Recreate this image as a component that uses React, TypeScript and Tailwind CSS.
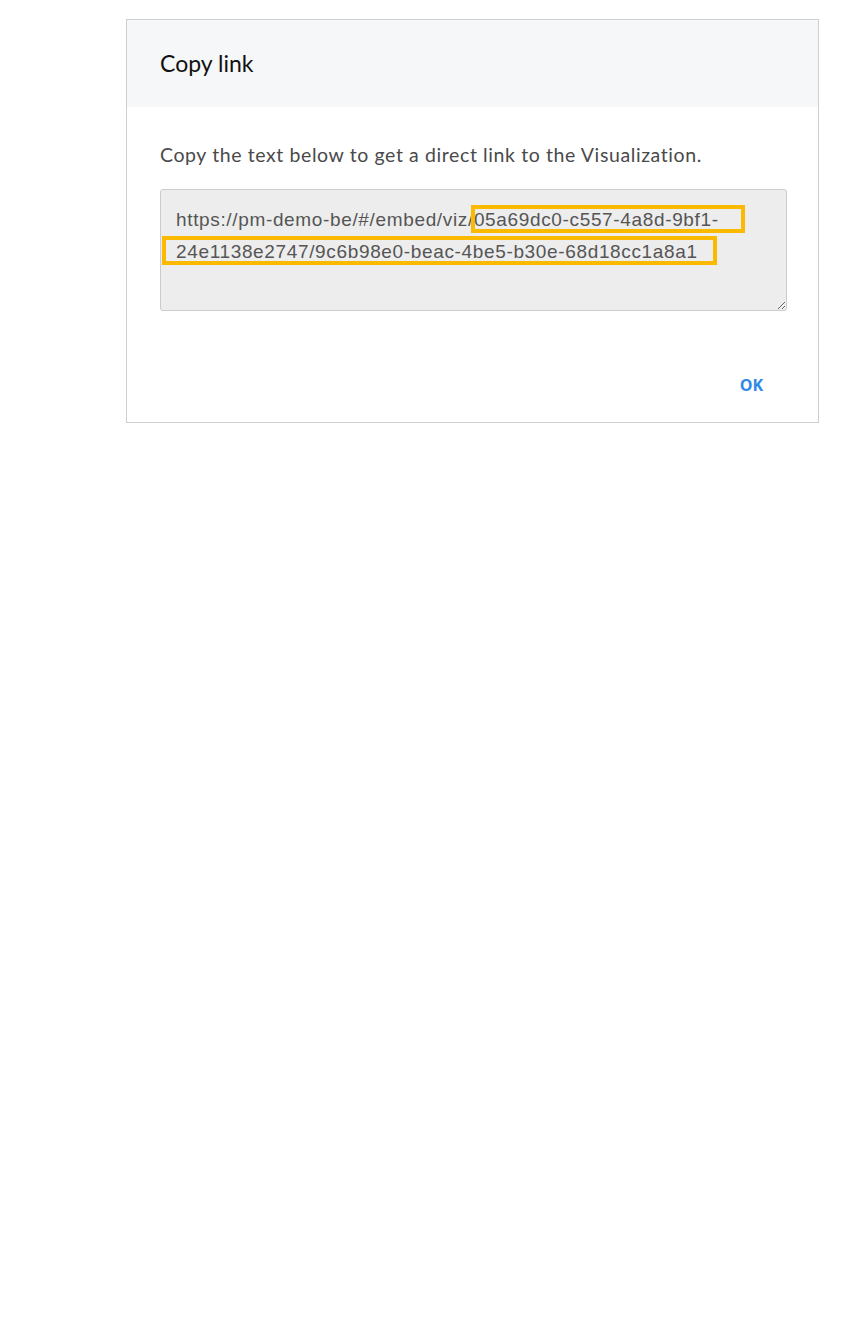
import React from 'react'

const LINK =
  'https://pm-demo-be/#/embed/viz/05a69dc0-c557-4a8d-9bf1-\n24e1138e2747/9c6b98e0-beac-4be5-b30e-68d18cc1a8a1'

function CopyLinkDialog() {
  return (
    <div className="ml-[126px] mt-[19px] w-[693px] border border-[#cfcfcf] bg-white">
      <div className="h-[87px] bg-[#f6f7f8] px-[33px] pt-[28px]">
        <h2 className="font-['Lato',sans-serif] text-[23px] leading-[30px] text-[#111]">Copy link</h2>
      </div>

      <div className="px-[33px] pt-[35px]">
        <p className="font-['Lato',sans-serif] text-[19.5px] leading-[26px] tracking-[0.6px] text-[#4a4a4a]">
          Copy the text below to get a direct link to the Visualization.
        </p>

        <div className="relative mt-[21px]">
          <textarea
            readOnly
            value={LINK}
            className="block h-[122px] w-[627px] resize-y rounded-[3px] border border-[#cccccc] bg-[#ededed] px-[15px] pt-[14px] font-['Liberation_Sans',Arial,sans-serif] text-[19px] leading-[32px] tracking-[0.65px] text-[#555] outline-none"
          />
          {/* highlight boxes */}
          <div className="pointer-events-none absolute left-[311px] top-[16px] h-[28px] w-[274px] border-[4px] border-[#fbb900]" />
          <div className="pointer-events-none absolute left-[2px] top-[47px] h-[29px] w-[555px] border-[4px] border-[#fbb900]" />
        </div>
      </div>

      <div className="flex justify-end px-[55px] pb-[27px] pt-[64px]">
        <button className="font-['Open_Sans',sans-serif] text-[16px] font-bold leading-[20px] text-[#2d8ae6]">OK</button>
      </div>
    </div>
  )
}

export default function App() {
  return (
    <div className="min-h-[1344px] bg-white">
      <CopyLinkDialog />
    </div>
  )
}
